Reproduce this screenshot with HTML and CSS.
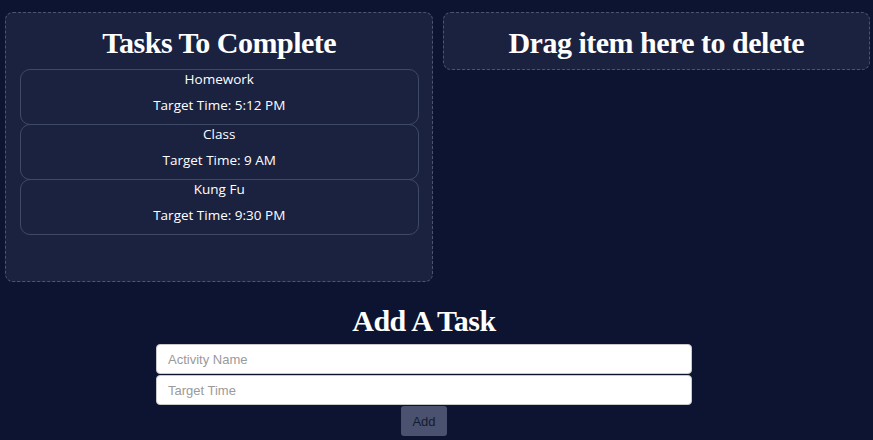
FILE: index.html
```html
<!DOCTYPE html>
<html>
<head>
<meta charset="utf-8">
<link rel="stylesheet" href="styles.css">
</head>
<body>
<div class="top">
  <section class="panel tasks">
    <h1 class="title">Tasks To Complete</h1>
    <div class="card">
      <div class="name">Homework</div>
      <p class="time">Target Time: 5:12 PM</p>
    </div>
    <div class="card">
      <div class="name">Class</div>
      <p class="time">Target Time: 9 AM</p>
    </div>
    <div class="card">
      <div class="name">Kung Fu</div>
      <p class="time">Target Time: 9:30 PM</p>
    </div>
  </section>
  <section class="panel trash">
    <h1 class="title">Drag item here to delete</h1>
  </section>
</div>
<div class="add">
  <h2 class="title add-title">Add A Task</h2>
  <input class="field" type="text" placeholder="Activity Name">
  <input class="field" type="text" placeholder="Target Time">
  <button class="btn">Add</button>
</div>
</body>
</html>
```
FILE: styles.css
```css
html, body {
  margin: 0;
  padding: 0;
  background: #0c1431;
  height: 100%;
  overflow: hidden;
}
body {
  font-family: "Open Sans", sans-serif;
  color: #fff;
}
.top {
  display: grid;
  grid-template-columns: 1fr 1fr;
  column-gap: 10px;
  align-items: start;
  padding: 12px 3px 0 5px;
}
.panel {
  background: #1a2240;
  border: 1px dashed #4b5573;
  border-radius: 8px;
  box-sizing: border-box;
  min-width: 0;
}
.tasks {
  padding: 0 13px 46px 14px;
}
.trash {
  height: 58px;
}
.title {
  margin: 0;
  font-family: "Liberation Serif", serif;
  font-weight: bold;
  font-size: 30px;
  letter-spacing: -0.5px;
  line-height: 52px;
  padding-top: 4px;
  text-align: center;
  color: #fff;
}
.card {
  border: 1px solid #3f4968;
  border-radius: 10px;
  height: 56px;
  box-sizing: border-box;
  text-align: center;
  font-size: 13.5px;
  margin-top: -1px;
}
.card:first-of-type {
  margin-top: 0;
}
.name {
  line-height: 18px;
}
.time {
  margin: 8px 0 0;
  line-height: 18px;
}
.add {
  width: 848px;
  display: flex;
  flex-direction: column;
  align-items: center;
  padding-top: 19px;
}
.add-title {
  line-height: 36px;
  padding-top: 2px;
  margin-bottom: 5px;
}
.field {
  width: 536px;
  height: 30px;
  box-sizing: border-box;
  border: 1px solid #c9c9c9;
  border-radius: 4px;
  background: #fff;
  padding: 0 11px;
  font-family: "Liberation Sans", Arial, sans-serif;
  font-size: 13px;
  margin: 0 0 1px;
}
.field::placeholder {
  color: #9a9a9a;
}
.btn {
  width: 46px;
  height: 30px;
  border: none;
  border-radius: 3px;
  background: #4a526f;
  color: #161b2c;
  font-family: "Liberation Sans", Arial, sans-serif;
  font-size: 13px;
  padding: 0;
}
```
